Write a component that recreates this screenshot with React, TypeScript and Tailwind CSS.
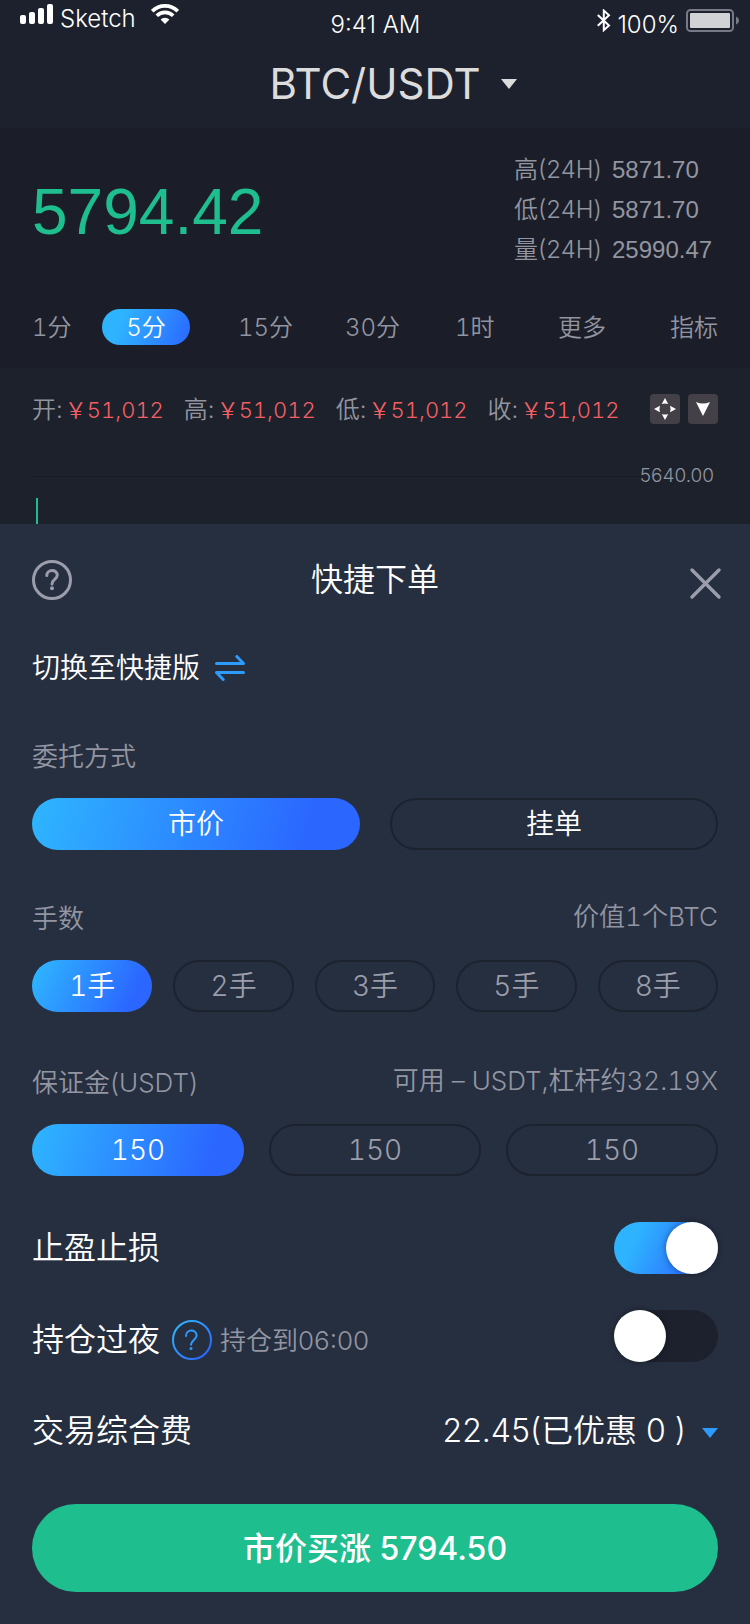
import { useState } from 'react';
import type { ReactNode } from 'react';

const GRADIENT_WIDE = 'bg-[linear-gradient(105deg,#2eb4ff_2%,#2b67ff_83%)]';
const GRADIENT_SHORT = 'bg-[linear-gradient(115deg,#2eb4ff_5%,#2b67ff_82%)]';

function StatusBar() {
  return (
    <div className="grid h-10 grid-cols-3 items-start pl-5 pr-[11px] pt-1 text-2xl font-light leading-7 text-white">
      <div className="flex items-start">
        <svg width="33" height="20" viewBox="0 0 33 20" fill="currentColor" aria-hidden="true">
          <rect x="0" y="11" width="6" height="9" rx="2" />
          <rect x="9" y="8" width="6" height="12" rx="2" />
          <rect x="18" y="4" width="6" height="16" rx="2" />
          <rect x="27" y="0" width="6" height="20" rx="2" />
        </svg>
        <span className="ml-[7px] pt-px">Sketch</span>
        <svg className="ml-[15px]" width="28" height="20" viewBox="0 0 28 20" fill="none" stroke="currentColor" aria-hidden="true">
          <path d="M1.2 7.2A18.2 18.2 0 0 1 26.8 7.2" strokeWidth="3.8" />
          <path d="M5.8 11.8a11.6 11.6 0 0 1 16.4 0" strokeWidth="3.6" />
          <path d="M14 20l-4.4-4.5a6.2 6.2 0 0 1 8.8 0z" fill="currentColor" stroke="none" />
        </svg>
      </div>
      <span className="pr-2 pt-[7px] text-center">9:41 AM</span>
      <div className="flex items-start justify-end pt-[5px]">
        <svg width="14" height="23" viewBox="0 0 14 23" fill="none" stroke="currentColor" strokeWidth="2" aria-hidden="true">
          <path d="M.8 6L12 16.6 6.8 21.2V1.6L12 6.3.8 16.8" />
        </svg>
        <span className="ml-[6px] pt-0.5">100%</span>
        <svg className="ml-[7px]" width="53" height="23" viewBox="0 0 53 23" aria-hidden="true">
          <rect x="1" y="1" width="46" height="21" rx="3.5" fill="none" stroke="#777985" strokeWidth="2" />
          <rect x="4" y="4" width="40" height="15" rx="1" fill="#d1d2d6" />
          <path d="M50 7.500c4 1.500 4 6.500 0 8z" fill="#777985" />
        </svg>
      </div>
    </div>
  );
}

function PairHeader() {
  return (
    <header className="flex h-22 items-center justify-center pl-[36px]">
      <button type="button" className="flex items-center gap-5 text-[42px] leading-12 text-[#dddcdc]">
        BTC/USDT
        <svg width="16" height="10" viewBox="0 0 16 10" fill="currentColor" aria-hidden="true">
          <path d="M0 0h16L8 10z" />
        </svg>
      </button>
    </header>
  );
}

const stats = [
  ['高(24H)', '5871.70'],
  ['低(24H)', '5871.70'],
  ['量(24H)', '25990.47'],
];

const periods = ['1分', '5分', '15分', '30分', '1时', '更多', '指标'];

function PriceSection() {
  const [period, setPeriod] = useState('5分');
  return (
    <section className="bg-[#1b1e29] px-8 pb-[23px] pt-[22px]">
      <div className="flex items-center justify-between">
        <strong className="pt-1 font-['Liberation_Sans',sans-serif] text-[64px] font-normal leading-16 text-[#1fbe8f]">
          5794.42
        </strong>
        <dl className="w-[204px] text-2xl leading-10 text-[#9295a0]">
          {stats.map(([label, value]) => (
            <div key={label} className="flex">
              <dt className="w-[98px] font-[350]">{label}</dt>
              <dd className="font-['Liberation_Sans',sans-serif]">{value}</dd>
            </div>
          ))}
        </dl>
      </div>
      <nav className="mt-[39px] grid grid-cols-[70fr_136fr_107fr_110fr_103fr_112fr_48fr] text-2xl font-[350] leading-9 tabular-nums text-[#9295a0]">
        {periods.map((p) => (
          <button
            key={p}
            type="button"
            aria-pressed={p === period}
            onClick={() => setPeriod(p)}
            className={
              p === period
                ? 'h-9 w-22 rounded-full bg-[linear-gradient(110deg,#2eb4ff_22%,#2b67ff_100%)] pt-px text-white'
                : 'h-9 whitespace-nowrap pt-px text-left'
            }
          >
            {p}
          </button>
        ))}
      </nav>
    </section>
  );
}

function ChartSection() {
  return (
    <section className="bg-[#1c212c] px-8 pt-[26px]">
      <div className="flex items-center justify-between">
        <dl className="flex gap-5 whitespace-nowrap pt-0.5 text-2xl font-[350] leading-[28px]">
          {['开', '高', '低', '收'].map((name) => (
            <div key={name} className="flex">
              <dt className="text-[#9295a0]">{name}:</dt>
              <dd className="ml-0.5 text-[22px] tabular-nums text-[#f55f63]">￥51,012</dd>
            </div>
          ))}
        </dl>
        <div className="flex gap-2">
          <button type="button" aria-label="全屏" className="size-[30px] rounded bg-[#434147] text-white">
            <svg width="30" height="30" viewBox="0 0 30 30" fill="currentColor" aria-hidden="true">
              <path d="M15 4l3.200 6q-3.200-1.200-6.400 0zM15 26l3.200-6q-3.200 1.200-6.400 0zM4 15l6-3.200q-1.200 3.200 0 6.400zM26 15l-6-3.200q1.200 3.200 0 6.400z" />
            </svg>
          </button>
          <button type="button" aria-label="展开" className="size-[30px] rounded bg-[#434147] text-white">
            <svg width="30" height="30" viewBox="0 0 30 30" fill="currentColor" aria-hidden="true">
              <path d="M8 8q7 3 14 0l-7 14z" />
            </svg>
          </button>
        </div>
      </div>
      <div className="mt-10 flex items-center pr-1 text-[19px] font-light leading-6 text-[#9295a0]">
        <span className="h-px flex-1 bg-[#191c26]" />
        <span>5640.00</span>
      </div>
      <svg className="mt-[10px] block" width="10" height="26" viewBox="0 0 10 26" aria-hidden="true">
        <rect x="4" width="2" height="26" fill="#1fbe8f" />
      </svg>
    </section>
  );
}

interface PillProps {
  active: boolean;
  onClick: () => void;
  fill: string;
  idle: string;
  children: ReactNode;
}

function Pill({ active, onClick, fill, idle, children }: PillProps) {
  return (
    <button
      type="button"
      aria-pressed={active}
      onClick={onClick}
      className={`h-13 rounded-full text-[28px] font-[350] leading-12 ${
        active ? `${fill} text-white` : `border-2 border-[#1c222e] ${idle}`
      }`}
    >
      {children}
    </button>
  );
}

function Toggle({ id, initial }: { id: string; initial: boolean }) {
  const [on, setOn] = useState(initial);
  return (
    <input
      id={id}
      type="checkbox"
      role="switch"
      checked={on}
      onChange={(e) => setOn(e.target.checked)}
      className="h-13 w-26 shrink-0 appearance-none rounded-full bg-[#1c212d] before:block before:size-13 before:rounded-full before:bg-white before:shadow-[0_0_6px_rgba(0,0,0,0.4)] before:content-[''] checked:bg-[linear-gradient(115deg,#2eb4ff_22%,#2b67ff_85%)] checked:before:translate-x-13"
    />
  );
}

function OrderSheet() {
  const [mode, setMode] = useState(0);
  const [lot, setLot] = useState(0);
  const [margin, setMargin] = useState(0);
  return (
    <main className="bg-[#262f40] px-8 pb-8 pt-9">
      <div className="grid h-10 grid-cols-[1fr_auto_1fr] items-center">
        <button type="button" aria-label="帮助" className="justify-self-start text-[#9b9dab]">
          <svg width="40" height="40" viewBox="0 0 40 40" fill="none" stroke="currentColor" strokeWidth="3" aria-hidden="true">
            <circle cx="20" cy="20" r="18.500" />
            <path d="M14.800 15.500c0-6.600 10.500-6.300 10.500-.4 0 4.300-5.300 4.300-5.300 8.800" strokeLinecap="round" />
            <circle cx="20" cy="28.300" r="2" fill="currentColor" stroke="none" />
          </svg>
        </button>
        <h1 className="text-[32px] font-[350] leading-10 text-white">快捷下单</h1>
        <button type="button" aria-label="关闭" className="-mr-[5px] justify-self-end pt-1.5 text-[#9b9dab]">
          <svg width="34" height="34" viewBox="0 0 34 34" fill="none" stroke="currentColor" strokeWidth="3.400" strokeLinecap="round" aria-hidden="true">
            <path d="M3 4l27 27M30 4L3 31" />
          </svg>
        </button>
      </div>

      <button type="button" className="mt-12 flex items-center gap-[15px] text-[28px] font-[350] leading-10 text-white">
        切换至快捷版
        <svg width="30" height="26" viewBox="0 0 30 26" fill="none" stroke="#2d9bfb" strokeWidth="3" strokeLinecap="round" strokeLinejoin="round" aria-hidden="true">
          <path d="M1.500 8.500h27l-6.700-7M28.500 17.500h-27l6.700 7" />
        </svg>
      </button>

      <h2 className="mt-[49px] text-[26px] font-[350] leading-10 text-[#9396a2]">委托方式</h2>
      <div className="mt-[21px] grid grid-cols-2 gap-[30px]">
        {['市价', '挂单'].map((name, i) => (
          <Pill key={name} active={mode === i} onClick={() => setMode(i)} fill={GRADIENT_WIDE} idle="text-white">
            {name}
          </Pill>
        ))}
      </div>

      <div className="mt-[47px] flex justify-between text-[26px] font-[350] leading-10 text-[#9396a2]">
        <h2 className="pt-0.5">手数</h2>
        <span className="tabular-nums">价值1个BTC</span>
      </div>
      <div className="mt-[21px] grid grid-cols-5 gap-[21px] tabular-nums">
        {['1手', '2手', '3手', '5手', '8手'].map((name, i) => (
          <Pill key={name} active={lot === i} onClick={() => setLot(i)} fill={GRADIENT_SHORT} idle="text-[#9b9eaa]">
            {name}
          </Pill>
        ))}
      </div>

      <div className="mt-[49px] flex justify-between text-[26px] font-[350] leading-10 text-[#9396a2]">
        <h2 className="pt-0.5">保证金(USDT)</h2>
        <span className="tabular-nums">可用 – USDT,杠杆约32.19X</span>
      </div>
      <div className="mt-[21px] grid grid-cols-3 gap-[25px] tabular-nums">
        {[0, 1, 2].map((i) => (
          <Pill key={i} active={margin === i} onClick={() => setMargin(i)} fill={GRADIENT_WIDE} idle="text-[#9b9eaa]">
            150
          </Pill>
        ))}
      </div>

      <div className="mt-[46px] flex h-13 items-center justify-between">
        <label htmlFor="stop" className="text-[32px] font-[350] leading-10 text-white">
          止盈止损
        </label>
        <Toggle id="stop" initial={true} />
      </div>

      <div className="mt-9 flex h-15 items-start justify-between">
        <div className="flex items-center pt-[9px]">
          <label htmlFor="overnight" className="text-[32px] font-[350] leading-10 text-white">
            持仓过夜
          </label>
          <button type="button" aria-label="持仓过夜说明" className="ml-3">
            <svg width="40" height="40" viewBox="0 0 40 40" fill="none" aria-hidden="true">
              <defs>
                <linearGradient id="ring" x1="0" y1="0" x2="1" y2="1">
                  <stop offset="0.100" stopColor="#2eb4ff" />
                  <stop offset="0.900" stopColor="#2b67ff" />
                </linearGradient>
              </defs>
              <circle cx="20" cy="20" r="19" stroke="url(#ring)" strokeWidth="2" />
              <path d="M14 16c0-7.200 10.600-7 10.600-.6 0 4.200-5.600 5-5.600 9.400" stroke="#2d9bfb" strokeWidth="2" strokeLinecap="round" />
              <circle cx="19" cy="28.600" r="1.500" fill="#2d9bfb" />
            </svg>
          </button>
          <span className="ml-2 pt-0.5 text-[26px] font-[350] leading-10 text-[#9396a2]">持仓到06:00</span>
        </div>
        <Toggle id="overnight" initial={false} />
      </div>

      <div className="mt-[41px] flex items-center justify-between text-[32px] font-[350] leading-10 text-white">
        <span>交易综合费</span>
        <button type="button" className="flex items-center gap-4">
          22.45(已优惠 0 )
          <svg className="mt-1" width="16" height="10" viewBox="0 0 16 10" fill="#2d9bfb" aria-hidden="true">
            <path d="M0 0h16L8 10z" />
          </svg>
        </button>
      </div>

      <button type="button" className="mt-[53px] h-22 w-full rounded-full bg-[#1fbe8f] pt-0.5 text-[32px] font-medium text-white">
        市价买涨 5794.50
      </button>
    </main>
  );
}

export default function App() {
  return (
    <div className="min-h-screen bg-[#1c212d] font-['Inter','Noto_Sans_CJK_SC',sans-serif]">
      <StatusBar />
      <PairHeader />
      <PriceSection />
      <ChartSection />
      <OrderSheet />
    </div>
  );
}
